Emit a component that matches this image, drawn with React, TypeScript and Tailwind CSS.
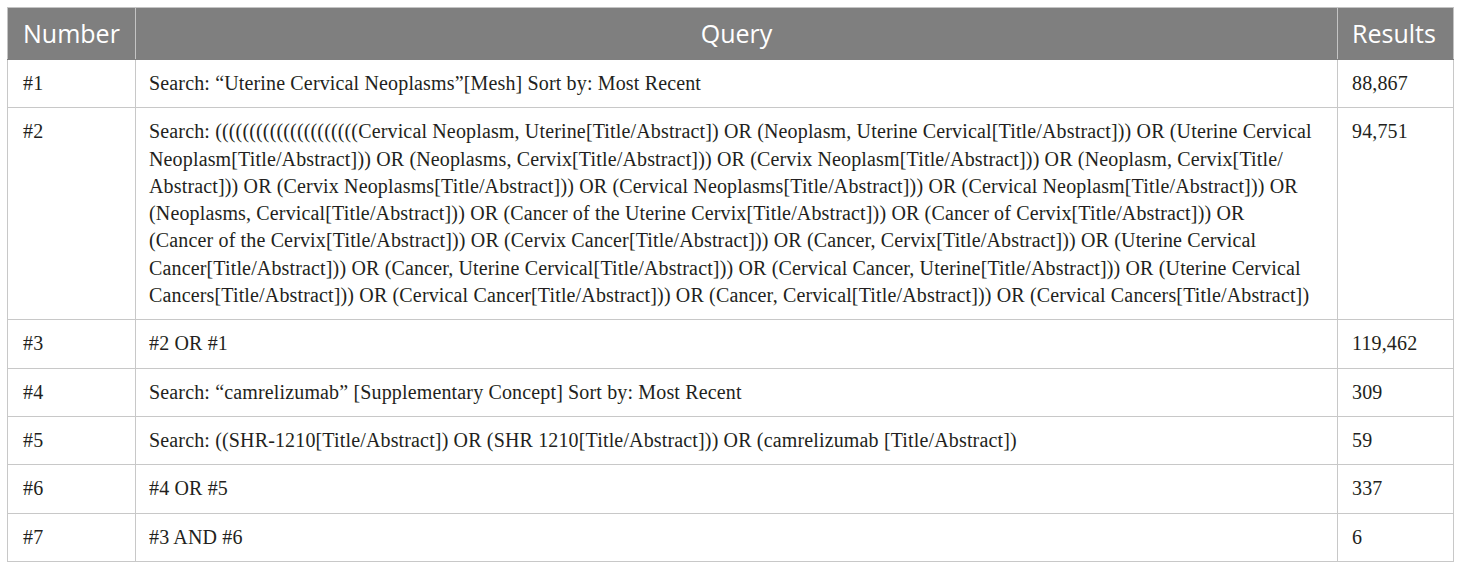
import React from "react";

const serif = { fontFamily: '"Liberation Serif", "Times New Roman", serif' };

const row2Lines = [
  "Search: (((((((((((((((((((((Cervical Neoplasm, Uterine[Title/Abstract]) OR (Neoplasm, Uterine Cervical[Title/Abstract])) OR (Uterine Cervical",
  "Neoplasm[Title/Abstract])) OR (Neoplasms, Cervix[Title/Abstract])) OR (Cervix Neoplasm[Title/Abstract])) OR (Neoplasm, Cervix[Title/",
  "Abstract])) OR (Cervix Neoplasms[Title/Abstract])) OR (Cervical Neoplasms[Title/Abstract])) OR (Cervical Neoplasm[Title/Abstract])) OR",
  "(Neoplasms, Cervical[Title/Abstract])) OR (Cancer of the Uterine Cervix[Title/Abstract])) OR (Cancer of Cervix[Title/Abstract])) OR",
  "(Cancer of the Cervix[Title/Abstract])) OR (Cervix Cancer[Title/Abstract])) OR (Cancer, Cervix[Title/Abstract])) OR (Uterine Cervical",
  "Cancer[Title/Abstract])) OR (Cancer, Uterine Cervical[Title/Abstract])) OR (Cervical Cancer, Uterine[Title/Abstract])) OR (Uterine Cervical",
  "Cancers[Title/Abstract])) OR (Cervical Cancer[Title/Abstract])) OR (Cancer, Cervical[Title/Abstract])) OR (Cervical Cancers[Title/Abstract])",
];

const rows: { n: string; q: React.ReactNode; r: string }[] = [
  { n: "#1", q: "Search: \u201CUterine Cervical Neoplasms\u201D[Mesh] Sort by: Most Recent", r: "88,867" },
  {
    n: "#2",
    q: (
      <>
        {row2Lines.map((l, i) => (
          <span key={i} className="block whitespace-nowrap">
            {l}
          </span>
        ))}
      </>
    ),
    r: "94,751",
  },
  { n: "#3", q: "#2 OR #1", r: "119,462" },
  { n: "#4", q: "Search: \u201Ccamrelizumab\u201D [Supplementary Concept] Sort by: Most Recent", r: "309" },
  { n: "#5", q: "Search: ((SHR-1210[Title/Abstract]) OR (SHR 1210[Title/Abstract])) OR (camrelizumab [Title/Abstract])", r: "59" },
  { n: "#6", q: "#4 OR #5", r: "337" },
  { n: "#7", q: "#3 AND #6", r: "6" },
];

export default function App() {
  return (
    <div className="w-[1460px] h-[571px] bg-white pt-[7px] pl-[7px]">
      <table className="border-collapse w-[1446px] table-fixed">
        <colgroup>
          <col className="w-[128px]" />
          <col className="w-[1202px]" />
          <col className="w-[116px]" />
        </colgroup>
        <thead>
          <tr
            className="bg-[#7f7f7f] text-white h-[52px] text-[25px]"
            style={{ fontFamily: '"Open Sans", "Noto Sans", sans-serif' }}
          >
            <th className="border border-[#c4c4c4] border-b-[#7f7f7f] font-normal text-left pl-[15px] pr-1 leading-none">Number</th>
            <th className="border border-[#c4c4c4] border-b-[#7f7f7f] font-normal text-center leading-none">Query</th>
            <th className="border border-[#c4c4c4] border-b-[#7f7f7f] font-normal text-left pl-[14px] leading-none">Results</th>
          </tr>
        </thead>
        <tbody className="text-[#231f20] text-[20px] leading-[27.3px] tracking-[0.15px]" style={serif}>
          {rows.map((row) => (
            <tr key={row.n}>
              <td className="border border-[#c8c8c8] pl-[15px] py-[10px] align-top">{row.n}</td>
              <td className="border border-[#c8c8c8] pl-[13px] pr-1 py-[10px] align-top">{row.q}</td>
              <td className="border border-[#c8c8c8] pl-[14px] py-[10px] align-top">{row.r}</td>
            </tr>
          ))}
        </tbody>
      </table>
    </div>
  );
}
